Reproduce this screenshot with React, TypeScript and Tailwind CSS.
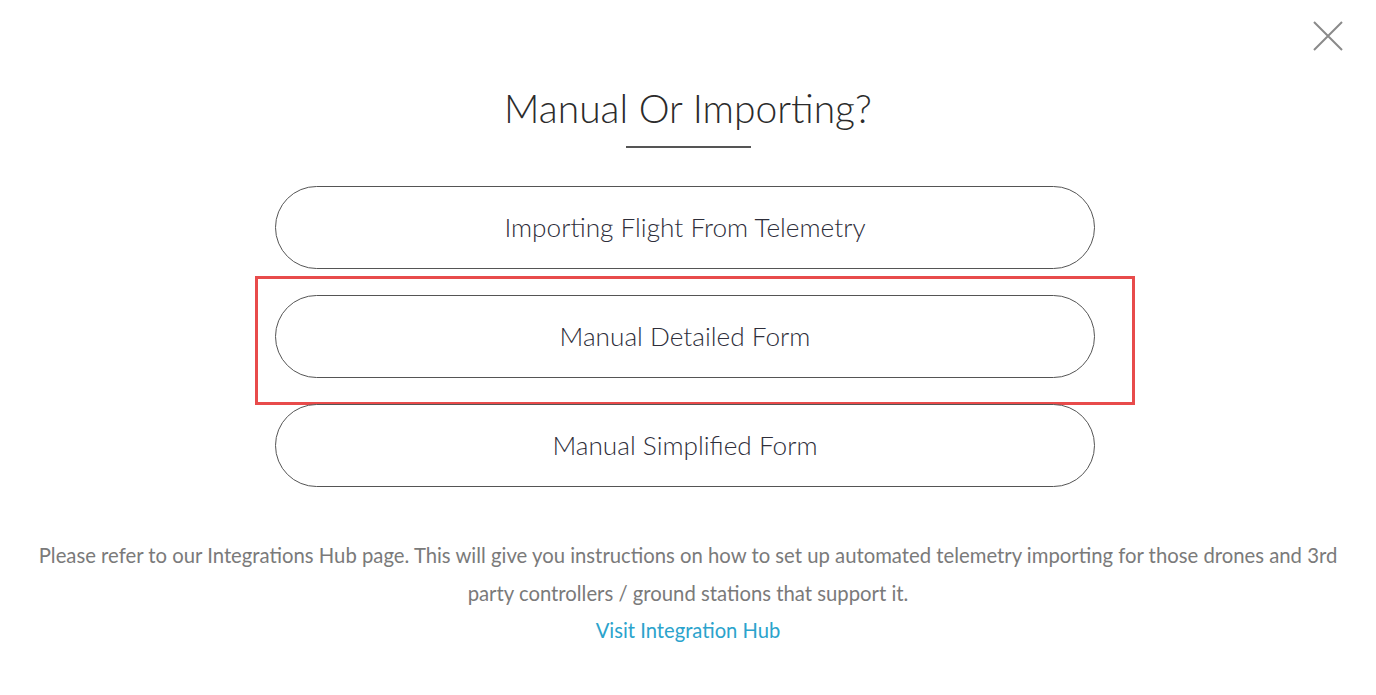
export default function App() {
  const options = [
    "Importing Flight From Telemetry",
    "Manual Detailed Form",
    "Manual Simplified Form",
  ];

  return (
    <main
      className="relative min-h-screen bg-white text-[#333]"
      style={{ fontFamily: "Lato, 'Open Sans', sans-serif" }}
    >
      <button className="absolute right-[32px] top-[20px] p-0 text-[#8a8a8a]" aria-label="Close">
        <svg width="32" height="32" viewBox="0 0 32 32" fill="none" stroke="currentColor" strokeWidth="2">
          <path d="M2 2 L30 30 M30 2 L2 30" />
        </svg>
      </button>

      <div className="flex flex-col items-center pt-[84px]">
        <h1 className="text-[39px] font-light leading-[48px] text-[#2b2b2b]">Manual Or Importing?</h1>
        <div className="mt-[14px] h-[2px] w-[125px] bg-[#555]" />

        <div className="mr-[6px] mt-[38px] flex flex-col gap-[26px]">
          {options.map((label, i) => (
            <div key={label} className="relative">
              <button className="flex h-[83px] w-[820px] items-center justify-center rounded-full border border-[#555] bg-white text-[26.2px] font-light text-[#2e2e3a]">
                {label}
              </button>
              {i === 1 && (
                <div className="pointer-events-none absolute -bottom-[27px] -left-[20px] -right-[40px] -top-[19px] border-[3px] border-[#e84b4b]" />
              )}
            </div>
          ))}
        </div>

        <p className="mt-[49px] px-[30px] text-center text-[20.3px] leading-[38px] text-[#7a7a7a]">
          Please refer to our Integrations Hub page. This will give you instructions on how to set up automated
          telemetry importing for those drones and 3rd party controllers / ground stations that support it.
        </p>
        <a href="#" className="text-[20.2px] leading-[37px] text-[#2ba3cc]">
          Visit Integration Hub
        </a>
      </div>
    </main>
  );
}
